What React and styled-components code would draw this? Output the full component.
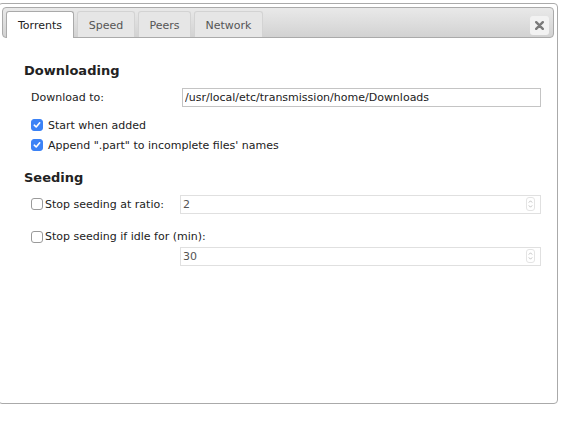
import React, {useState} from "react";
import styled, {createGlobalStyle} from "styled-components";

const GlobalStyle = createGlobalStyle`
  html, body {
    margin: 0;
    padding: 0;
    background: #fff;
  }
  body {
    font-family: "DejaVu Sans", Verdana, sans-serif;
    font-size: 11px;
    color: #222;
  }
`

const Page = styled.div`
  width: 568px;
  height: 422px;
  overflow: hidden;
  padding-top: 3px;
  box-sizing: border-box;
`

const Dialog = styled.div`
  margin-left: -2px;
  width: 560px;
  height: 401px;
  box-sizing: border-box;
  border: 1px solid #aaa;
  border-radius: 4px;
  padding: 3px;
  background: #fff;
  display: flex;
  flex-direction: column;
`

const TabBar = styled.div`
  display: flex;
  align-items: flex-end;
  gap: 3px;
  height: 31px;
  box-sizing: border-box;
  padding: 3px 0 0 3px;
  border: 1px solid #aaa;
  border-radius: 4px;
  background: linear-gradient(to bottom, #e9e9e9, #d2d2d2);
`

const Tab = styled.div`
  width: ${props => props.w}px;
  height: ${props => props.active ? '27px' : '26px'};
  margin-bottom: ${props => props.active ? '-1px' : '0'};
  box-sizing: border-box;
  padding-top: 1px;
  display: flex;
  align-items: center;
  justify-content: center;
  border: 1px solid ${props => props.active ? '#aaa' : '#d3d3d3'};
  border-bottom: none;
  border-radius: 3px 3px 0 0;
  background: ${props => props.active ? '#fff' : '#e6e6e6'};
  color: ${props => props.active ? '#212121' : '#555'};
  cursor: pointer;
`

const Spacer = styled.div`
  flex: 1;
`

const CloseButton = styled.div`
  align-self: center;
  margin: 0 4px 0 0;
  width: 19px;
  height: 19px;
  box-sizing: border-box;
  border-radius: 3px;
  background: #f2f2f2;
  display: flex;
  align-items: center;
  justify-content: center;
  position: relative;
  top: 1px;
`

const Body = styled.div`
  padding: 25px 13px 0 22px;
`

const SectionTitle = styled.h3`
  margin: ${props => props.top || 0}px 0 8px 0;
  font-size: 13px;
  font-weight: bold;
  color: #222;
  line-height: 16px;
`

const Group = styled.div`
  padding-left: 7px;
  display: flex;
  flex-direction: column;
`

const Row = styled.div`
  display: grid;
  grid-template-columns: ${props => props.labelWidth}px 1fr;
  align-items: center;
  min-height: 20px;
  margin-bottom: ${props => props.gap || 0}px;
`

const Label = styled.label`
  display: flex;
  align-items: center;
  color: #222;
  cursor: pointer;
`

const TextInput = styled.input`
  height: 19px;
  box-sizing: border-box;
  border: 1px solid #c4c4c4;
  padding: 0 2px;
  font-family: "DejaVu Sans", Verdana, sans-serif;
  font-size: 11px;
  color: #222;
  outline: none;
`

const NumberBox = styled.div`
  height: 19px;
  box-sizing: border-box;
  border: 1px solid #e0e0e0;
  display: flex;
  align-items: center;
  padding-right: 5px;
`

const NumberField = styled.input`
  flex: 1;
  min-width: 0;
  border: none;
  outline: none;
  padding: 0 2px;
  font-family: "DejaVu Sans", Verdana, sans-serif;
  font-size: 11px;
  color: #555;
  background: transparent;
`

const Spinner = styled.div`
  width: 7px;
  height: 12px;
  border: 1px solid #e4e4e4;
  border-radius: 3px;
  display: flex;
  align-items: center;
  justify-content: center;
`

const Box = styled.span`
  width: 12px;
  height: 12px;
  box-sizing: border-box;
  border-radius: 3px;
  margin-right: ${props => props.gap}px;
  flex-shrink: 0;
  display: flex;
  align-items: center;
  justify-content: center;
  background: ${props => props.checked ? '#3b82f6' : '#fff'};
  border: 1px solid ${props => props.checked ? '#3b82f6' : '#9a9a9a'};
`

const CheckRow = styled.div`
  display: flex;
  align-items: center;
  height: ${props => props.h || 20}px;
`

const Check = ({checked, gap = 5, onChange, children}) => (
    <Label onClick={onChange}>
        <Box checked={checked} gap={gap}>
            {checked && <svg width="8" height="8" viewBox="0 0 8 8">
                <path d="M1.3 4.2 L3.2 6 L6.7 1.8" fill="none" stroke="#fff" strokeWidth="1.6"
                      strokeLinecap="round" strokeLinejoin="round"/>
            </svg>}
        </Box>
        {children}
    </Label>
)

const Stepper = () => (
    <Spinner>
        <svg width="5" height="10" viewBox="0 0 5 10">
            <path d="M0.8 3.6 L2.5 1.8 L4.2 3.6 M0.8 6.4 L2.5 8.2 L4.2 6.4" fill="none" stroke="#b5b5b5"
                  strokeWidth="0.8"/>
        </svg>
    </Spinner>
)

const NumberInput = ({value, onChange}) => (
    <NumberBox>
        <NumberField value={value} onChange={e => onChange(e.target.value)}/>
        <Stepper/>
    </NumberBox>
)

const tabs = [
    {name: 'Torrents', w: 68},
    {name: 'Speed', w: 58},
    {name: 'Peers', w: 53},
    {name: 'Network', w: 69},
]

export default function App() {
    const [active, setActive] = useState('Torrents');
    const [dir, setDir] = useState('/usr/local/etc/transmission/home/Downloads');
    const [startAdded, setStartAdded] = useState(true);
    const [appendPart, setAppendPart] = useState(true);
    const [ratioOn, setRatioOn] = useState(false);
    const [idleOn, setIdleOn] = useState(false);
    const [ratio, setRatio] = useState('2');
    const [idle, setIdle] = useState('30');

    return (
        <Page>
            <GlobalStyle/>
            <Dialog>
                <TabBar>
                    {tabs.map(t => <Tab key={t.name} w={t.w} active={active === t.name}
                                        onClick={() => setActive(t.name)}>{t.name}</Tab>)}
                    <Spacer/>
                    <CloseButton>
                        <svg width="9" height="9" viewBox="0 0 9 9">
                            <path d="M1.2 1.2 L7.8 7.8 M7.8 1.2 L1.2 7.8" stroke="#7a7a7a" strokeWidth="2.4"
                                  strokeLinecap="round"/>
                        </svg>
                    </CloseButton>
                </TabBar>
                <Body>
                    <SectionTitle>Downloading</SectionTitle>
                    <Group>
                        <Row labelWidth={151} gap={8}>
                            <Label>Download to:</Label>
                            <TextInput value={dir} onChange={e => setDir(e.target.value)}/>
                        </Row>
                        <CheckRow>
                            <Check checked={startAdded} onChange={() => setStartAdded(!startAdded)}>
                                Start when added
                            </Check>
                        </CheckRow>
                        <CheckRow>
                            <Check checked={appendPart} onChange={() => setAppendPart(!appendPart)}>
                                Append ".part" to incomplete files' names
                            </Check>
                        </CheckRow>
                    </Group>
                    <SectionTitle top={15}>Seeding</SectionTitle>
                    <Group>
                        <Row labelWidth={149} gap={13}>
                            <Check gap={2} checked={ratioOn} onChange={() => setRatioOn(!ratioOn)}>
                                Stop seeding at ratio:
                            </Check>
                            <NumberInput value={ratio} onChange={setRatio}/>
                        </Row>
                        <CheckRow h={19}>
                            <Check gap={2} checked={idleOn} onChange={() => setIdleOn(!idleOn)}>
                                Stop seeding if idle for (min):
                            </Check>
                        </CheckRow>
                        <Row labelWidth={149}>
                            <span/>
                            <NumberInput value={idle} onChange={setIdle}/>
                        </Row>
                    </Group>
                </Body>
            </Dialog>
        </Page>
    );
}
